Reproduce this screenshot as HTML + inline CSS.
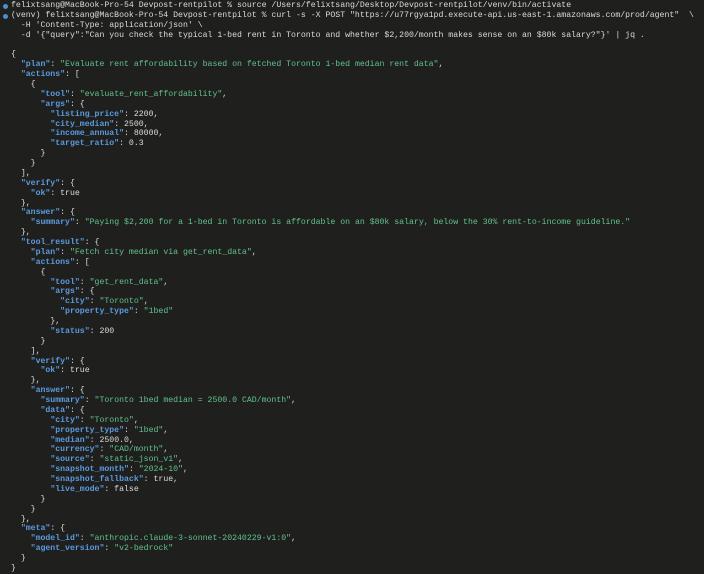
<!DOCTYPE html>
<html><head><meta charset="utf-8"><style>
html,body{margin:0;padding:0;background:#1f1f1d;width:704px;height:573px;overflow:hidden}
pre{margin:0;position:absolute;left:11px;top:1px;font-family:"Liberation Mono",monospace;font-size:8.2px;line-height:9.87px;color:#dcdcdc;white-space:pre}
.k{color:#5b9be0;font-weight:bold}
.s{color:#62c28e}
.dot{position:absolute;left:3px;width:5px;height:5px;border-radius:50%;background:#4a8fd0}
</style></head><body>
<div class="dot" style="top:4px"></div>
<div class="dot" style="top:14px"></div>
<pre>felixtsang@MacBook-Pro-54 Devpost-rentpilot % source /Users/felixtsang/Desktop/Devpost-rentpilot/venv/bin/activate
(venv) felixtsang@MacBook-Pro-54 Devpost-rentpilot % curl -s -X POST "https://u77rgya1pd.execute-api.us-east-1.amazonaws.com/prod/agent"  \
  -H 'Content-Type: application/json' \
  -d '{"query":"Can you check the typical 1-bed rent in Toronto and whether $2,200/month makes sense on an $80k salary?"}' | jq .

{
  <span class="k">"plan"</span>: <span class="s">"Evaluate rent affordability based on fetched Toronto 1-bed median rent data"</span>,
  <span class="k">"actions"</span>: [
    {
      <span class="k">"tool"</span>: <span class="s">"evaluate_rent_affordability"</span>,
      <span class="k">"args"</span>: {
        <span class="k">"listing_price"</span>: 2200,
        <span class="k">"city_median"</span>: 2500,
        <span class="k">"income_annual"</span>: 80000,
        <span class="k">"target_ratio"</span>: 0.3
      }
    }
  ],
  <span class="k">"verify"</span>: {
    <span class="k">"ok"</span>: true
  },
  <span class="k">"answer"</span>: {
    <span class="k">"summary"</span>: <span class="s">"Paying $2,200 for a 1-bed in Toronto is affordable on an $80k salary, below the 30% rent-to-income guideline."</span>
  },
  <span class="k">"tool_result"</span>: {
    <span class="k">"plan"</span>: <span class="s">"Fetch city median via get_rent_data"</span>,
    <span class="k">"actions"</span>: [
      {
        <span class="k">"tool"</span>: <span class="s">"get_rent_data"</span>,
        <span class="k">"args"</span>: {
          <span class="k">"city"</span>: <span class="s">"Toronto"</span>,
          <span class="k">"property_type"</span>: <span class="s">"1bed"</span>
        },
        <span class="k">"status"</span>: 200
      }
    ],
    <span class="k">"verify"</span>: {
      <span class="k">"ok"</span>: true
    },
    <span class="k">"answer"</span>: {
      <span class="k">"summary"</span>: <span class="s">"Toronto 1bed median = 2500.0 CAD/month"</span>,
      <span class="k">"data"</span>: {
        <span class="k">"city"</span>: <span class="s">"Toronto"</span>,
        <span class="k">"property_type"</span>: <span class="s">"1bed"</span>,
        <span class="k">"median"</span>: 2500.0,
        <span class="k">"currency"</span>: <span class="s">"CAD/month"</span>,
        <span class="k">"source"</span>: <span class="s">"static_json_v1"</span>,
        <span class="k">"snapshot_month"</span>: <span class="s">"2024-10"</span>,
        <span class="k">"snapshot_fallback"</span>: true,
        <span class="k">"live_mode"</span>: false
      }
    }
  },
  <span class="k">"meta"</span>: {
    <span class="k">"model_id"</span>: <span class="s">"anthropic.claude-3-sonnet-20240229-v1:0"</span>,
    <span class="k">"agent_version"</span>: <span class="s">"v2-bedrock"</span>
  }
}</pre>
</body></html>
